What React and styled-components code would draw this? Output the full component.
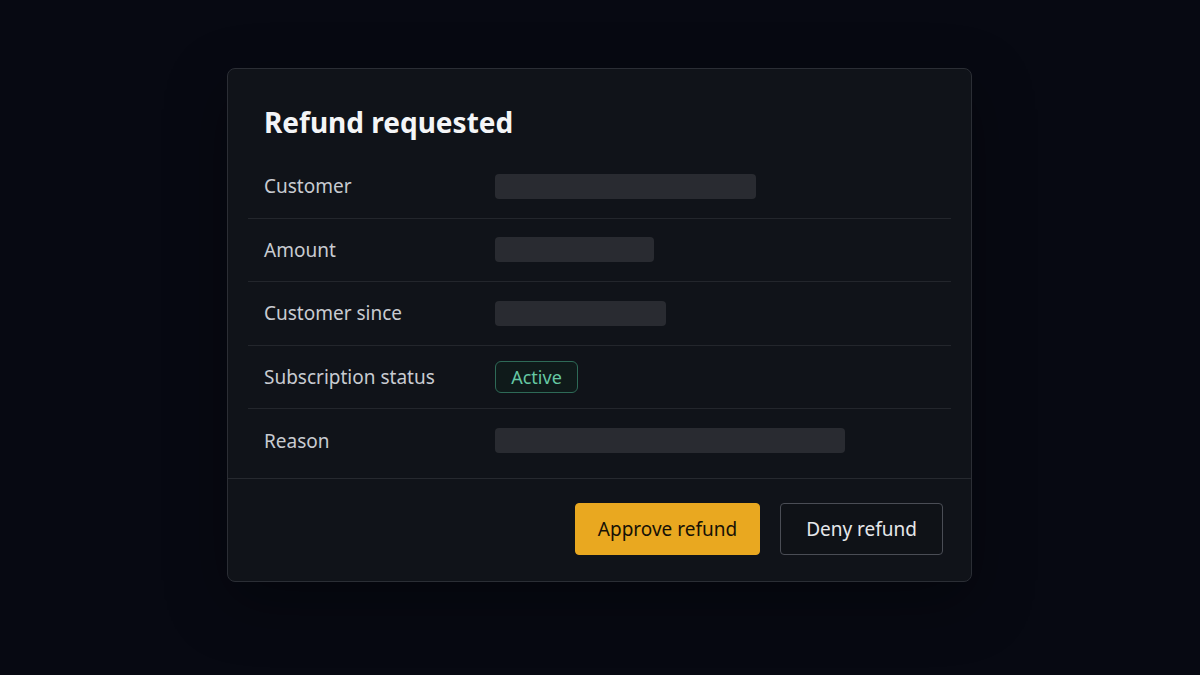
import styled, { createGlobalStyle } from "styled-components";

const GlobalStyle = createGlobalStyle`
  * {
    box-sizing: border-box;
    margin: 0;
    padding: 0;
  }

  html, body {
    width: 100%;
    height: 100%;
    background: #070912;
    font-family: "Noto Sans", "Open Sans", sans-serif;
  }
`;

const rows = [
  { label: "Customer", width: 261 },
  { label: "Amount", width: 159 },
  { label: "Customer since", width: 171 },
  { label: "Subscription status", badge: "Active" },
  { label: "Reason", width: 350 },
];

function App() {
  return (
    <>
      <GlobalStyle />
      <Page>
        <Card>
          <Titulo>Refund requested</Titulo>

          <Lista>
            {rows.map((row) => (
              <Linha key={row.label}>
                <Rotulo>{row.label}</Rotulo>
                {row.badge ? (
                  <Badge>{row.badge}</Badge>
                ) : (
                  <Barra style={{ width: row.width }} />
                )}
              </Linha>
            ))}
          </Lista>

          <Rodape>
            <Botao $primary>Approve refund</Botao>
            <Botao>Deny refund</Botao>
          </Rodape>
        </Card>
      </Page>
    </>
  );
}

export default App;

const Page = styled.div`
  width: 100%;
  height: 675px;
  display: flex;
  justify-content: center;
  padding-top: 68px;
  padding-right: 1px;
  background: #070912;
`;

const Card = styled.div`
  width: 745px;
  height: 514px;
  background: #101319;
  border: 1px solid #2b2e35;
  border-radius: 8px;
  display: flex;
  flex-direction: column;
  box-shadow: 0 20px 60px rgba(0, 0, 0, 0.35);
`;

const Titulo = styled.h1`
  color: #f4f5f7;
  font-size: 28px;
  font-weight: 700;
  line-height: 36px;
  padding: 35px 36px 0;
  margin-bottom: 15px;
`;

const Lista = styled.div`
  margin: 0 20px;
  padding-bottom: 5px;
`;

const Linha = styled.div`
  height: 63.5px;
  display: grid;
  grid-template-columns: 231px 1fr;
  align-items: center;
  padding-left: 16px;
  border-bottom: 1px solid #23262c;

  &:last-child {
    border-bottom: none;
  }
`;

const Rotulo = styled.span`
  color: #c8cbd1;
  font-size: 19px;
  line-height: 24px;
`;

const Barra = styled.div`
  height: 25px;
  border-radius: 4px;
  background: #292b31;
`;

const Badge = styled.span`
  justify-self: start;
  display: inline-flex;
  align-items: center;
  justify-content: center;
  width: 83px;
  height: 32px;
  border: 1px solid #2e6a57;
  border-radius: 6px;
  background: #0f1a1a;
  color: #66c8a4;
  font-size: 18px;
`;

const Rodape = styled.div`
  border-top: 1px solid #26292f;
  display: flex;
  justify-content: flex-end;
  gap: 20px;
  padding: 24px 28px 0;
`;

const Botao = styled.button`
  height: 52px;
  padding: 0 ${(p) => (p.$primary ? "22px" : "25px")};
  border-radius: 4px;
  font-family: "Noto Sans", "Open Sans", sans-serif;
  font-size: 19px;
  cursor: pointer;
  border: 1px solid ${(p) => (p.$primary ? "#e9a820" : "#4a4d55")};
  background: ${(p) => (p.$primary ? "#e9a820" : "#0f1217")};
  color: ${(p) => (p.$primary ? "#161106" : "#e6e8eb")};
`;
